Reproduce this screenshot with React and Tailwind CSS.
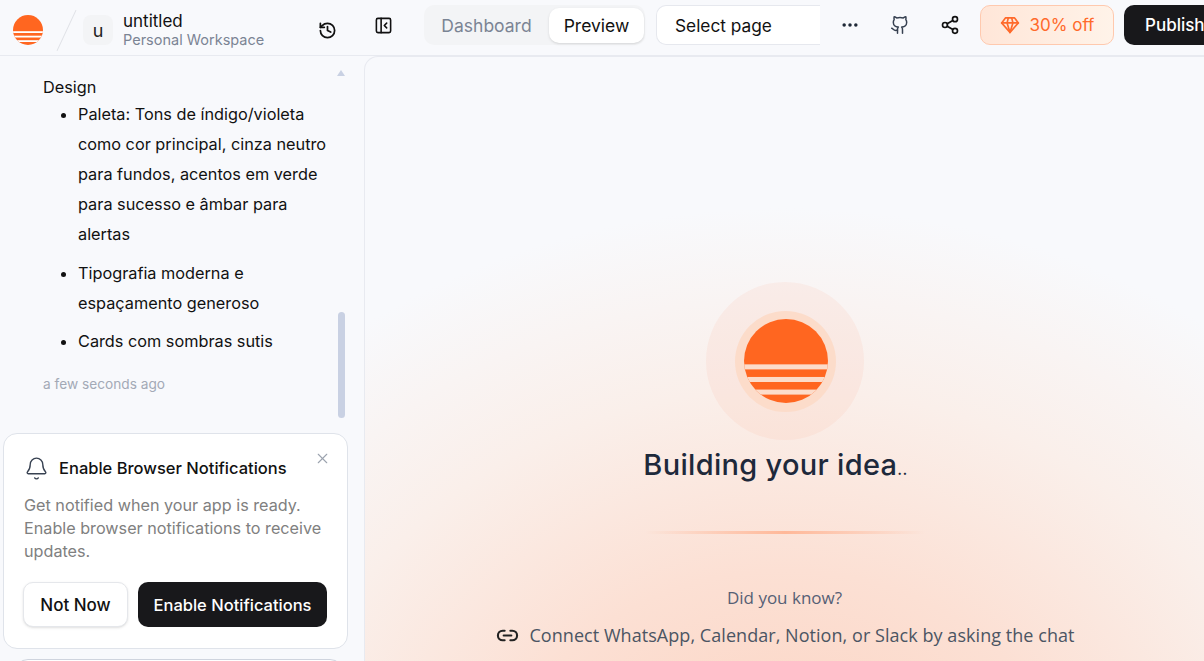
import { Bell, Ellipsis, Github, History, Link2, PanelLeftClose, Share2, X } from 'lucide-react';

const SunLogo = ({ size, cutColor = '#ffffff' }) => (
  <svg width={size} height={size} viewBox="0 0 100 100" className="block">
    <defs>
      <clipPath id={`sun-${size}`}>
        <circle cx="50" cy="50" r="50" />
      </clipPath>
    </defs>
    <g clipPath={`url(#sun-${size})`}>
      <rect x="0" y="0" width="100" height="100" fill="#ff6620" />
      <rect x="0" y="54" width="100" height="6" fill={cutColor} />
      <rect x="0" y="69" width="100" height="6" fill={cutColor} />
      <rect x="0" y="84" width="100" height="6" fill={cutColor} />
    </g>
  </svg>
);

const Gem = () => (
  <svg width="20" height="20" viewBox="0 0 24 24" fill="none" stroke="#ff6a2b" strokeWidth="2" strokeLinejoin="round" strokeLinecap="round">
    <path d="M6.5 3.5h11l4.5 6-10 11.5L2 9.5z" />
    <path d="M2 9.5h20M8.5 9.5 12 21l3.5-11.5M8.5 9.5 10 3.5M15.5 9.5 14 3.5" />
  </svg>
);

const Header = () => (
  <header className="flex h-[56px] shrink-0 items-start overflow-hidden border-b border-[#e8eaf0] font-['Inter',sans-serif]">
    <div className="mt-[15px] flex h-[30px] items-center">
      <div className="ml-[13px]">
        <SunLogo size={30} />
      </div>
      <div className="ml-[23px] h-[45px] w-px origin-center rotate-[25deg] bg-[#dfe1e6]" />
      <div className="ml-[16px] flex h-[30px] w-[30px] items-center justify-center rounded-lg bg-[#f3f4f6] text-[18px] text-[#222]">u</div>
      <div className="ml-[10px] w-[194px]">
        <div className="text-[17px] leading-[20px] text-[#111]">untitled</div>
        <div className="text-[14.5px] leading-[18px] text-[#7b8494]">Personal Workspace</div>
      </div>
      <History size={19} strokeWidth={2.2} className="ml-[1px] text-[#111]" />
    </div>
    <div className="mt-[5px] flex h-[40px] items-center">
      <PanelLeftClose size={19} strokeWidth={2} className="ml-[37px] text-[#111]" />
      <div className="ml-[31px] flex h-[40px] w-[221px] items-center rounded-[10px] bg-[#f3f4f6] pl-[3px] pt-[1px] text-[17.5px]">
        <div className="w-[119px] pt-[1px] text-center text-[#7b8494]">Dashboard</div>
        <div className="ml-[3px] flex h-[35px] w-[95px] items-center justify-center rounded-[10px] bg-white pt-[1px] text-[#111] shadow-sm">Preview</div>
      </div>
      <div className="ml-[11px] flex h-[40px] w-[164px] shrink-0 items-center rounded-l-[10px] border-y border-l border-[#e6e8ee] bg-white pl-[18px] pt-[2px] text-[17.3px] text-[#111]">Select page</div>
      <Ellipsis size={20} strokeWidth={2.2} className="ml-[20px] shrink-0 text-[#1f2937]" />
      <Github size={20} strokeWidth={1.8} className="ml-[30px] shrink-0 text-[#374151]" />
      <Share2 size={20} strokeWidth={2} className="ml-[30px] shrink-0 text-[#111]" />
      <div className="ml-[20px] flex h-[40px] w-[134px] shrink-0 items-center justify-center gap-[10px] rounded-[10px] border border-[#ffc9ae] bg-gradient-to-r from-[#ffe6d8] to-[#fff3e9] text-[17px] text-[#ff6a2b]">
        <Gem />
        <span className="pt-[2px]">30% off</span>
      </div>
      <div className="ml-[10px] flex h-[40px] w-[110px] shrink-0 items-center rounded-[10px] bg-[#18181b] pl-[21px] pt-[2px] text-[17px] font-medium text-white">Publish</div>
    </div>
  </header>
);

const Messages = () => (
  <div className="relative h-[377px] shrink-0 overflow-hidden pl-[43px] pr-[36px] pt-[17px] text-[16.28px] text-[#111]">
    <p className="leading-[28px]">Design</p>
    <ul className="-mt-[2px] ml-[35px] list-disc">
      <li className="leading-[30px]">Paleta: Tons de índigo/violeta como cor principal, cinza neutro para fundos, acentos em verde para sucesso e âmbar para alertas</li>
      <li className="mt-[9px] leading-[30px]">Tipografia moderna e espaçamento generoso</li>
      <li className="mt-[8px] leading-[30px]">Cards com sombras sutis</li>
    </ul>
    <p className="mt-[18px] text-[13.7px] leading-[20px] text-[#a3a9b6]">a few seconds ago</p>
    <div className="absolute right-[19px] top-[256px] h-[106px] w-[7px] rounded-full bg-[#c9d1e3]" />
    <div className="absolute right-[19px] top-[14px] h-0 w-0 border-x-[4px] border-b-[6px] border-x-transparent border-b-[#c9d1e3]" />
  </div>
);

const NotificationCard = () => (
  <div className="relative ml-[3px] h-[216px] w-[345px] shrink-0 rounded-[14px] border border-[#dfe3ea] bg-white pl-[20px] pr-[20px] pt-[22px]">
    <X size={17} strokeWidth={1.5} className="absolute right-[16px] top-[16px] text-[#9ca3af]" />
    <div className="flex items-center gap-[10px]">
      <Bell size={25} strokeWidth={1.3} className="text-[#374151]" />
      <span className="text-[16.5px] font-medium text-[#111]">Enable Browser Notifications</span>
    </div>
    <p className="mt-[13px] text-[16.2px] leading-[23px] text-[#808080]">Get notified when your app is ready. Enable browser notifications to receive updates.</p>
    <div className="-ml-[1px] mt-[19px] flex gap-[10px]">
      <div className="flex h-[45px] w-[105px] items-center justify-center rounded-[10px] border border-[#e5e7eb] bg-white pt-[2px] text-[17px] font-medium text-[#111] shadow-sm">Not Now</div>
      <div className="flex h-[45px] w-[189px] items-center justify-center rounded-[10px] bg-[#18181b] pt-[2px] text-[16.5px] font-medium text-white">Enable Notifications</div>
    </div>
  </div>
);

const Sidebar = () => (
  <aside className="w-[364px] shrink-0 overflow-hidden font-['Inter',sans-serif]">
    <Messages />
    <NotificationCard />
    <div className="ml-[14px] mt-[10px] h-[30px] w-[330px] rounded-t-[14px] border border-[#cfd4de] bg-white" />
  </aside>
);

const Preview = () => (
  <main className="flex flex-1 flex-col items-center overflow-hidden rounded-tl-[14px] border-l border-t border-[#e8eaf0] bg-[radial-gradient(ellipse_85%_100%_at_50%_125%,#fbd2c0_0%,#fce0d4_40%,#faefea_70%,#f8f9fc_100%)] font-['Open_Sans',sans-serif]">
    <div className="mt-[225px] flex h-[158px] w-[158px] shrink-0 items-center justify-center rounded-full bg-[#ff6a2b]/[0.06]">
      <div className="flex h-[101px] w-[101px] translate-x-[1px] items-center justify-center rounded-full bg-[#fcdcca]">
        <SunLogo size={84} cutColor="#fcdcca" />
      </div>
    </div>
    <h1 className="mt-[7px] h-[36px] pr-[18px] font-['Inter',sans-serif] text-[29px] font-[450] leading-[36px] tracking-[0.3px] text-[#1e293b]">
      Building your idea<span className="text-[16px]">..</span>
    </h1>
    <div className="mt-[48px] h-[3px] w-[280px] shrink-0 bg-gradient-to-r from-transparent via-[#ffb899] to-transparent" />
    <p className="mt-[52px] text-[17px] leading-[24px] text-[#566075]">Did you know?</p>
    <div className="mt-[12px] flex items-center gap-[10px] pl-[2px] text-[18px] leading-[26px] tracking-[0.05px] text-[#4b5563]">
      <Link2 size={23} strokeWidth={2.2} className="text-[#222]" />
      Connect WhatsApp, Calendar, Notion, or Slack by asking the chat
    </div>
  </main>
);

export default function App() {
  return (
    <div className="flex h-[661px] w-[1204px] flex-col overflow-hidden bg-[#f8f9fc]">
      <Header />
      <div className="flex min-h-0 flex-1">
        <Sidebar />
        <Preview />
      </div>
    </div>
  );
}
